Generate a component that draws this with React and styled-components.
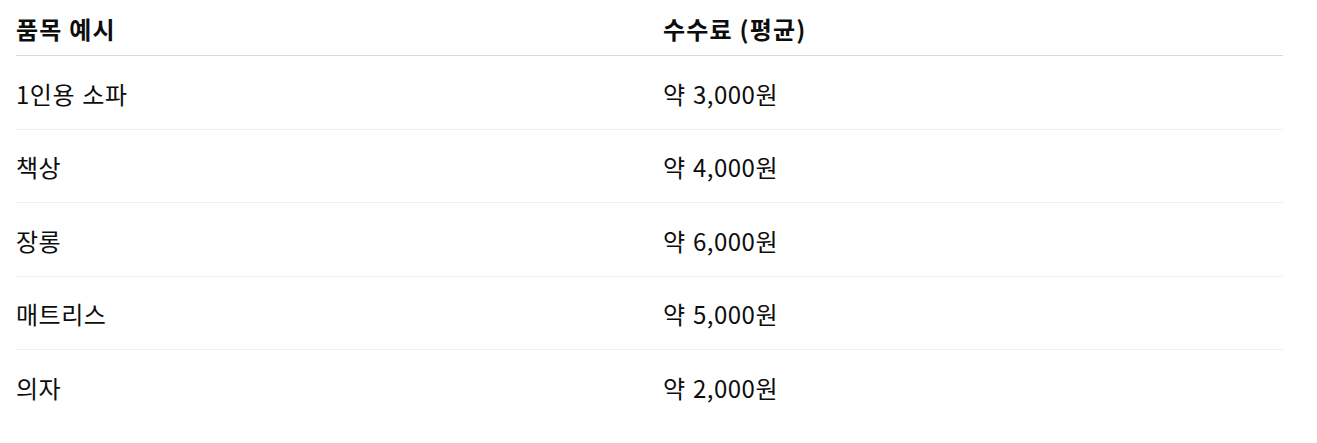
import React from "react";
import styled, { createGlobalStyle } from "styled-components";

const Global = createGlobalStyle`
  html, body { margin: 0; padding: 0; background: #ffffff; }
  body { font-family: "Noto Sans CJK KR", "Noto Sans", sans-serif; color: #0d0d0d; }
`;

const Wrap = styled.div`
  padding: 0 34px 0 16px;
`;

const Table = styled.div`
  display: grid;
  grid-template-columns: 647px 1fr;
  width: 1267px;
`;

const HeadCell = styled.div`
  display: flex;
  align-items: center;
  height: 56px;
  padding-top: 2px;
  box-sizing: border-box;
  border-bottom: 1px solid #d9d9d9;
  font-size: 24px;
  font-weight: 700;
  color: #0d0d0d;
  letter-spacing: 1.2px;
`;

const Cell = styled.div`
  display: flex;
  align-items: center;
  height: 73.5px;
  box-sizing: border-box;
  padding-top: 2px;
  border-bottom: ${(p) => (p.$last ? "none" : "1px solid #efefef")};
  font-size: 24px;
  font-weight: 400;
  color: #0d0d0d;
  letter-spacing: 0.5px;
  word-spacing: 1.5px;
`;

const rows = [
  ["1인용 소파", "약 3,000원"],
  ["책상", "약 4,000원"],
  ["장롱", "약 6,000원"],
  ["매트리스", "약 5,000원"],
  ["의자", "약 2,000원"],
];

export default function App() {
  return (
    <Wrap>
      <Global />
      <Table>
        <HeadCell>품목 예시</HeadCell>
        <HeadCell>수수료 (평균)</HeadCell>
        {rows.map(([a, b], i) => (
          <React.Fragment key={a}>
            <Cell $last={i === rows.length - 1}>{a}</Cell>
            <Cell $last={i === rows.length - 1}>{b}</Cell>
          </React.Fragment>
        ))}
      </Table>
    </Wrap>
  );
}
